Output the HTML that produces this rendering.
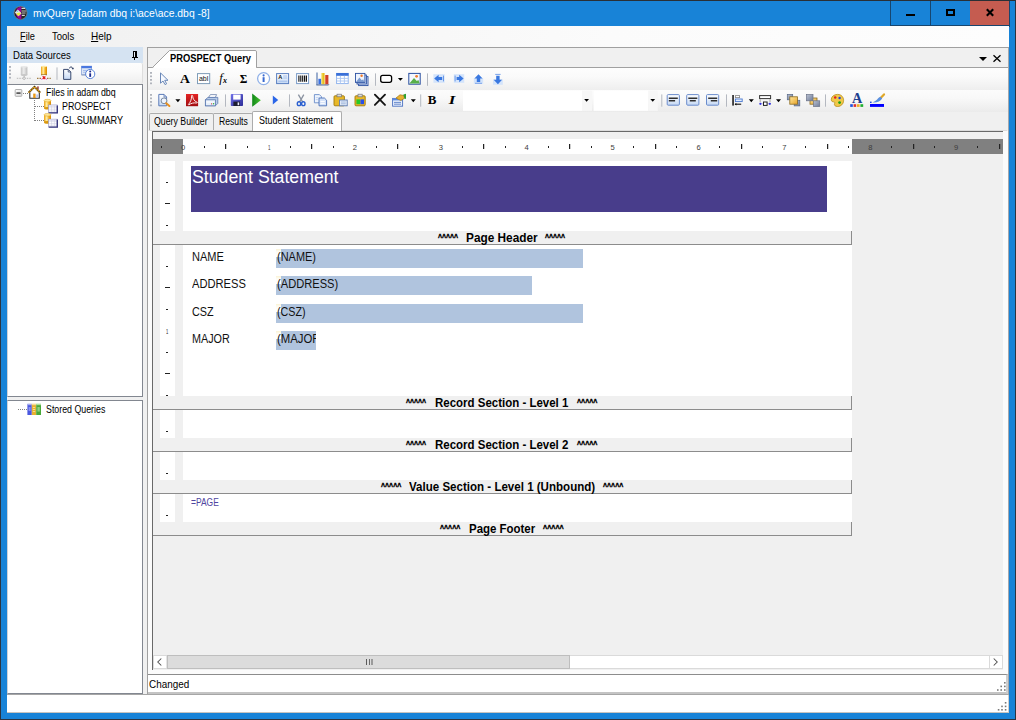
<!DOCTYPE html>
<html lang="en">
<head>
<meta charset="utf-8">
<title>mvQuery [adam dbq i:\ace\ace.dbq -8]</title>
<style>
*{box-sizing:border-box;margin:0;padding:0}
html,body{width:1016px;height:720px;overflow:hidden;background:#1883d7}
body{font-family:"Liberation Sans",sans-serif;font-size:12px;color:#000;position:relative}
.a{position:absolute}
.t{position:absolute;white-space:pre;line-height:1}
svg{position:absolute;overflow:visible}
#win{left:0;top:0;width:1016px;height:720px;background:#1883d7;border:1px solid #2c3440;border-top-color:#2a2f35}
#client{left:7px;top:26px;width:1002px;height:687px;background:#f0f0f0}
.sep{position:absolute;width:1px;height:16px;background:#b8bcc4}
.grip{position:absolute;width:2px;height:14px;background-image:linear-gradient(#b0b4bc 42%,transparent 42%);background-size:2px 4px}
.dd{position:absolute;width:0;height:0;border-left:3px solid transparent;border-right:3px solid transparent;border-top:3px solid #000}
.bar{position:absolute;left:153px;width:699px;height:14px;background:#f0f0f0;border-right:1px solid #8c8c8c;border-bottom:1px solid #8c8c8c}
.fld{position:absolute;left:276px;height:19px;background:#b0c4de}
.nt{position:absolute;left:276px;width:5px;height:8px;background:linear-gradient(#fbf3d4,#fdfcf6 35%,#fff)}
.vr{position:absolute;left:160px;width:15px;background:#fff}
.sec{position:absolute;left:183px;width:669px;background:#fff}
.vd{position:absolute;left:166px;width:2px;height:1px;background:#222}
.vl{position:absolute;left:165px;width:5px;height:1px;background:#222}
.hd{position:absolute;top:146px;width:1px;height:2px;background:#222}
.hl{position:absolute;top:144px;width:1px;height:5px;background:#222;box-shadow:0.5px 0 0 rgba(34,34,34,.45)}
</style>
</head>
<body>
<div id="win" class="a"></div>

<!-- title bar -->
<div class="t" id="t0" style="left:32.70px;top:9.00px;font-size:10.3px;color:#fff;font-weight:normal;transform:scaleX(1.0087);transform-origin:0 0;">mvQuery [adam dbq i:\ace\ace.dbq -8]</div>
<svg style="left:13px;top:5px" width="16" height="16" viewBox="13 5 16 16"><circle cx="20.5" cy="12.9" r="6.5" fill="#262626" stroke="#8a8078" stroke-width=".7"/><path d="M21.3 6.5A6.5 6.5 0 0 0 21.3 19.3Z" fill="#9a009a"/><path d="M21.5 8.3h3.6M21.8 15.4h3" stroke="#d8d8d8" stroke-width="1.3"/><path d="M21.5 10.9h4.6M22 13h3.6" stroke="#8c8c8c" stroke-width="1.5"/><path d="M14.8 12.4L17.8 9.6L21.6 13.2L18.4 16.2Z" fill="#e4e4dc"/><path d="M16 13.6L19.6 12.6L21 13.4L18.4 16.2Z" fill="#e8e840"/><circle cx="17.4" cy="11.2" r=".8" fill="#70d8d0"/></svg>
<div class="a" style="left:890px;top:1px;width:120px;height:26px;background:#17466f"></div>
<div class="a" style="left:891px;top:1px;width:39px;height:24px;background:#1883d7"></div>
<div class="a" style="left:931px;top:1px;width:39px;height:24px;background:#1883d7"></div>
<div class="a" style="left:970px;top:1px;width:39px;height:24px;background:#c55c50"></div>
<div class="a" style="left:906px;top:14px;width:9px;height:2.4px;background:#000"></div>
<div class="a" style="left:946px;top:9px;width:9px;height:7px;border:2px solid #000"></div>
<svg style="left:986px;top:9px" width="8" height="7" viewBox="0 0 8 7"><path d="M0.8 0.3L7.2 6.7M7.2 0.3L0.8 6.7" stroke="#000" stroke-width="2.1"/></svg>
<div id="client" class="a"></div>

<!-- menu bar -->
<div class="a" style="left:7px;top:26px;width:1002px;height:21px;background:linear-gradient(90deg,#f0f0f0,#fbfbfb 60%,#fdfdfd)"></div>
<div class="t" id="t1" style="left:20.00px;top:31.00px;font-size:10.5px;color:#000;font-weight:normal;transform:scaleX(0.8783);transform-origin:0 0;"><u>F</u>ile</div><div class="t" id="t2" style="left:52.00px;top:31.00px;font-size:10.5px;color:#000;font-weight:normal;transform:scaleX(0.9068);transform-origin:0 0;">Tools</div><div class="t" id="t3" style="left:91.30px;top:31.00px;font-size:10.5px;color:#000;font-weight:normal;transform:scaleX(0.9515);transform-origin:0 0;"><u>H</u>elp</div>
<!-- left panel -->
<div class="a" style="left:7px;top:47px;width:136px;height:16px;background:#d5e3f2"></div>
<div class="t" id="t4" style="left:12.50px;top:50.00px;font-size:10.5px;color:#000;font-weight:normal;transform:scaleX(0.9074);transform-origin:0 0;">Data Sources</div>
<svg style="left:131px;top:50px" width="7" height="10" viewBox="131 50 7 10" shape-rendering="crispEdges"><path d="M133 51h4v6h-4z" fill="#e8eef6"/><path d="M133 51h1v6h-1zM133 51h4v1h-4zM135 51h2v6h-2zM132 57h6v1h-6zM134 58h1v2h-1z" fill="#000"/></svg>
<div class="a" style="left:7px;top:63px;width:136px;height:21px;background:linear-gradient(#fdfdfd,#fafafa 40%,#eeeeee);border-right:1px solid #dedede;border-radius:0 2px 2px 0"></div>
<div class="grip" style="left:9px;top:66px;height:13px;background-size:2px 3.6px"></div>
<!-- tree 1 -->
<div class="a" style="left:7px;top:84px;width:136px;height:313px;background:#fff;border:1px solid #828790;border-left-color:#d0d2d8"></div>
<div class="t" id="t5" style="left:45.80px;top:88.00px;font-size:10px;color:#000;font-weight:normal;transform:scaleX(0.8830);transform-origin:0 0;">Files in adam dbq</div><div class="t" id="t6" style="left:62.20px;top:102.00px;font-size:10px;color:#000;font-weight:normal;transform:scaleX(0.8889);transform-origin:0 0;">PROSPECT</div><div class="t" id="t7" style="left:61.60px;top:116.00px;font-size:10px;color:#000;font-weight:normal;transform:scaleX(0.9098);transform-origin:0 0;">GL.SUMMARY</div>
<!-- tree 2 -->
<div class="a" style="left:7px;top:400px;width:136px;height:294px;background:#fff;border:1px solid #828790;border-left-color:#d0d2d8"></div>
<div class="t" id="t8" style="left:45.60px;top:405.00px;font-size:10px;color:#000;font-weight:normal;transform:scaleX(0.8817);transform-origin:0 0;">Stored Queries</div>
<!-- bottom status strip -->
<div class="a" style="left:7px;top:694px;width:1002px;height:19px;background:#fff;border-top:1px solid #a6a6a6;border-bottom:1px solid #c8c4be;border-right:1px solid #cfcfcf"></div>

<!-- right docking panel -->
<div class="a" style="left:147px;top:47px;width:862px;height:648px;background:#f0f0f0;border-left:1px solid #a0a0a0;border-top:1px solid #a0a0a0;border-right:1px solid #a4a8ae"></div>
<div class="a" style="left:148px;top:67px;width:860px;height:1px;background:#a0a0a0"></div>
<svg style="left:148px;top:48px" width="112" height="21" viewBox="148 48 112 21"><path d="M152.5 67.5L169.5 50.5H255Q256.5 50.5 256.5 52V67.5" fill="#fff" stroke="#a0a0a0" stroke-width="1"/><path d="M153 68L170 51.6H256V68Z" fill="#fff"/></svg>
<div class="t" id="t9" style="left:169.50px;top:53.00px;font-size:10.5px;color:#000;font-weight:bold;transform:scaleX(0.8894);transform-origin:0 0;">PROSPECT Query</div>
<svg style="left:979px;top:57px" width="8" height="4" viewBox="0 0 8 4"><path d="M0 0h8L4 4Z" fill="#000"/></svg>
<svg style="left:993px;top:55px" width="8" height="7" viewBox="0 0 8 7"><path d="M0.5 0.3L7.5 6.7M7.5 0.3L0.5 6.7" stroke="#000" stroke-width="1.3"/></svg>
<!-- toolbars bg -->
<div class="a" style="left:148px;top:68px;width:860px;height:22px;background:linear-gradient(#fdfdfd,#fafafa 40%,#eeeeee)"></div>
<div class="a" style="left:148px;top:90px;width:860px;height:22px;background:linear-gradient(#fcfcfc,#f8f8f8 40%,#ebebeb)"></div>
<div class="grip" style="left:150px;top:72px;height:13px;background-size:2px 3.5px"></div>
<div class="grip" style="left:150px;top:94px;height:13px;background-size:2px 3.5px"></div>
<!-- inner tabs -->
<div class="a" style="left:148px;top:130px;width:860px;height:545px;border:1px solid #fff;border-top-color:#dcdcdc"></div>
<div class="a" style="left:149px;top:113px;width:65px;height:17px;background:#f0f0f0;border:1px solid #acacac;border-bottom:none;border-radius:2px 2px 0 0"></div>
<div class="a" style="left:214px;top:113px;width:39px;height:17px;background:#f0f0f0;border:1px solid #acacac;border-bottom:none;border-left:none;border-radius:0 2px 0 0"></div>
<div class="a" style="left:252px;top:111px;width:90px;height:20px;background:#fff;border:1px solid #acacac;border-bottom:none;border-radius:2px 2px 0 0"></div>
<div class="t" id="t10" style="left:153.90px;top:117.00px;font-size:10px;color:#000;font-weight:normal;transform:scaleX(0.8769);transform-origin:0 0;">Query Builder</div><div class="t" id="t11" style="left:219.40px;top:117.00px;font-size:10px;color:#000;font-weight:normal;transform:scaleX(0.8637);transform-origin:0 0;">Results</div><div class="t" id="t12" style="left:259.40px;top:116.00px;font-size:10px;color:#000;font-weight:normal;transform:scaleX(0.8946);transform-origin:0 0;">Student Statement</div>
<!-- status -->
<div class="a" style="left:148px;top:674px;width:860px;height:21px;background:#fff;border-top:1px solid #8c8c8c;border-right:2px solid #cfcfcf;border-bottom:3px solid #c4c4c4"></div>
<div class="a" style="left:7px;top:694px;width:1002px;height:1px;background:#a6a6a6"></div>
<div class="t" id="t13" style="left:148.90px;top:679.00px;font-size:10.5px;color:#000;font-weight:normal;transform:scaleX(0.9420);transform-origin:0 0;">Changed</div>

<!-- design frame -->
<div class="a" style="left:148px;top:131px;width:860px;height:543px;background:#fbfbfb"></div>
<div class="a" style="left:152px;top:131px;width:851px;height:539px;background:#f0f0f0;border-left:1px solid #696969;border-top:1px solid #696969"></div>
<div class="a" style="left:153px;top:139px;width:850px;height:15px;background:#808080"></div>
<div class="a" style="left:183px;top:139px;width:669px;height:15px;background:#fff"></div>
<div class="hd" style="left:161px"></div>
<div class="t" id="t14" style="left:181.00px;top:144.00px;font-size:7.6px;color:#3c3c3c;font-weight:normal;">0</div>
<div class="hd" style="left:204px"></div>
<div class="hl" style="left:225px"></div>
<div class="hd" style="left:247px"></div>
<div class="t" id="t15" style="left:267.70px;top:144.00px;font-size:7.6px;color:#3c3c3c;font-weight:normal;transform:scaleX(0.6000);transform-origin:0 0;">1</div>
<div class="hd" style="left:290px"></div>
<div class="hl" style="left:311px"></div>
<div class="hd" style="left:333px"></div>
<div class="t" id="t16" style="left:352.80px;top:144.00px;font-size:7.6px;color:#3c3c3c;font-weight:normal;">2</div>
<div class="hd" style="left:376px"></div>
<div class="hl" style="left:397px"></div>
<div class="hd" style="left:419px"></div>
<div class="t" id="t17" style="left:438.70px;top:144.00px;font-size:7.6px;color:#3c3c3c;font-weight:normal;">3</div>
<div class="hd" style="left:462px"></div>
<div class="hl" style="left:483px"></div>
<div class="hd" style="left:505px"></div>
<div class="t" id="t18" style="left:524.60px;top:144.00px;font-size:7.6px;color:#3c3c3c;font-weight:normal;">4</div>
<div class="hd" style="left:548px"></div>
<div class="hl" style="left:569px"></div>
<div class="hd" style="left:591px"></div>
<div class="t" id="t19" style="left:610.50px;top:144.00px;font-size:7.6px;color:#3c3c3c;font-weight:normal;">5</div>
<div class="hd" style="left:633px"></div>
<div class="hl" style="left:655px"></div>
<div class="hd" style="left:676px"></div>
<div class="t" id="t20" style="left:696.40px;top:144.00px;font-size:7.6px;color:#3c3c3c;font-weight:normal;">6</div>
<div class="hd" style="left:719px"></div>
<div class="hl" style="left:741px"></div>
<div class="hd" style="left:762px"></div>
<div class="t" id="t21" style="left:782.30px;top:144.00px;font-size:7.6px;color:#3c3c3c;font-weight:normal;">7</div>
<div class="hd" style="left:805px"></div>
<div class="hl" style="left:827px"></div>
<div class="hd" style="left:848px"></div>
<div class="t" id="t22" style="left:868.20px;top:144.00px;font-size:7.6px;color:#3c3c3c;font-weight:normal;">8</div>
<div class="hd" style="left:891px"></div>
<div class="hl" style="left:913px"></div>
<div class="hd" style="left:934px"></div>
<div class="t" id="t23" style="left:954.10px;top:144.00px;font-size:7.6px;color:#3c3c3c;font-weight:normal;">9</div>
<div class="hd" style="left:977px"></div>
<div class="hl" style="left:999px"></div>
<div class="sec" style="top:161px;height:70px"></div>
<div class="sec" style="top:245px;height:151px"></div>
<div class="sec" style="top:410px;height:28px"></div>
<div class="sec" style="top:452px;height:28px"></div>
<div class="sec" style="top:494px;height:28px"></div>
<div class="vr" style="top:161px;height:70px"></div>
<div class="vd" style="top:182px"></div>
<div class="vl" style="top:203px"></div>
<div class="vd" style="top:225px"></div>
<div class="vr" style="top:245px;height:151px"></div>
<div class="vd" style="top:266px"></div>
<div class="vl" style="top:287px"></div>
<div class="vd" style="top:309px"></div>
<div class="t" id="t24" style="left:166.30px;top:328.00px;font-size:7.4px;color:#222;font-weight:normal;transform:scaleX(0.5500);transform-origin:0 0;">1</div>
<div class="vd" style="top:352px"></div>
<div class="vl" style="top:373px"></div>
<div class="vd" style="top:395px"></div>
<div class="vr" style="top:410px;height:28px"></div>
<div class="vd" style="top:431px"></div>
<div class="vr" style="top:452px;height:28px"></div>
<div class="vd" style="top:473px"></div>
<div class="vr" style="top:494px;height:28px"></div>
<div class="vd" style="top:515px"></div>
<div class="a" style="left:191px;top:166px;width:636px;height:46px;background:#483d8b"></div>
<div class="t" id="t25" style="left:191.90px;top:168.00px;font-size:18px;color:#fff;font-weight:normal;transform:scaleX(0.9826);transform-origin:0 0;">Student Statement</div>
<div class="bar" style="top:231px"></div>
<div class="t" id="t26" style="left:437.80px;top:233.00px;font-size:9px;color:#000;font-weight:bold;-webkit-text-stroke:0.45px #000;transform:scaleX(0.7660);transform-origin:0 0;">^^^^^</div>
<div class="t" id="t27" style="left:466.20px;top:232.00px;font-size:12.5px;color:#000;font-weight:bold;transform:scaleX(0.9464);transform-origin:0 0;">Page Header</div>
<div class="t" id="t28" style="left:545.40px;top:233.00px;font-size:9px;color:#000;font-weight:bold;-webkit-text-stroke:0.45px #000;transform:scaleX(0.7623);transform-origin:0 0;">^^^^^</div>
<div class="bar" style="top:396px"></div>
<div class="t" id="t29" style="left:405.90px;top:398.00px;font-size:9px;color:#000;font-weight:bold;-webkit-text-stroke:0.45px #000;transform:scaleX(0.7660);transform-origin:0 0;">^^^^^</div>
<div class="t" id="t30" style="left:434.60px;top:397.00px;font-size:12.5px;color:#000;font-weight:bold;transform:scaleX(0.9185);transform-origin:0 0;">Record Section - Level 1</div>
<div class="t" id="t31" style="left:576.70px;top:398.00px;font-size:9px;color:#000;font-weight:bold;-webkit-text-stroke:0.45px #000;transform:scaleX(0.7771);transform-origin:0 0;">^^^^^</div>
<div class="bar" style="top:438px"></div>
<div class="t" id="t32" style="left:405.90px;top:440.00px;font-size:9px;color:#000;font-weight:bold;-webkit-text-stroke:0.45px #000;transform:scaleX(0.7660);transform-origin:0 0;">^^^^^</div>
<div class="t" id="t33" style="left:434.60px;top:439.00px;font-size:12.5px;color:#000;font-weight:bold;transform:scaleX(0.9185);transform-origin:0 0;">Record Section - Level 2</div>
<div class="t" id="t34" style="left:576.70px;top:440.00px;font-size:9px;color:#000;font-weight:bold;-webkit-text-stroke:0.45px #000;transform:scaleX(0.7771);transform-origin:0 0;">^^^^^</div>
<div class="bar" style="top:480px"></div>
<div class="t" id="t35" style="left:380.60px;top:482.00px;font-size:9px;color:#000;font-weight:bold;-webkit-text-stroke:0.45px #000;transform:scaleX(0.7697);transform-origin:0 0;">^^^^^</div>
<div class="t" id="t36" style="left:409.00px;top:481.00px;font-size:12.5px;color:#000;font-weight:bold;transform:scaleX(0.9242);transform-origin:0 0;">Value Section - Level 1 (Unbound)</div>
<div class="t" id="t37" style="left:603.00px;top:482.00px;font-size:9px;color:#000;font-weight:bold;-webkit-text-stroke:0.45px #000;transform:scaleX(0.7697);transform-origin:0 0;">^^^^^</div>
<div class="bar" style="top:522px"></div>
<div class="t" id="t38" style="left:440.40px;top:524.00px;font-size:9px;color:#000;font-weight:bold;-webkit-text-stroke:0.45px #000;transform:scaleX(0.7697);transform-origin:0 0;">^^^^^</div>
<div class="t" id="t39" style="left:469.00px;top:523.00px;font-size:12.5px;color:#000;font-weight:bold;transform:scaleX(0.9161);transform-origin:0 0;">Page Footer</div>
<div class="t" id="t40" style="left:542.70px;top:524.00px;font-size:9px;color:#000;font-weight:bold;-webkit-text-stroke:0.45px #000;transform:scaleX(0.7882);transform-origin:0 0;">^^^^^</div>
<div class="fld" style="top:249px;width:307px"></div>
<div class="fld" style="top:276px;width:256px"></div>
<div class="fld" style="top:304px;width:307px"></div>
<div class="fld" style="top:331px;width:40px"></div>
<div class="nt" style="top:249px"></div><div class="nt" style="top:276px"></div><div class="nt" style="top:304px"></div><div class="nt" style="top:331px"></div>
<div class="t" id="t41" style="left:191.70px;top:251.00px;font-size:12px;color:#111;font-weight:normal;transform:scaleX(0.9202);transform-origin:0 0;">NAME</div><div class="t" id="t42" style="left:191.70px;top:278.00px;font-size:12px;color:#111;font-weight:normal;transform:scaleX(0.9292);transform-origin:0 0;">ADDRESS</div><div class="t" id="t43" style="left:191.70px;top:306.00px;font-size:12px;color:#111;font-weight:normal;transform:scaleX(0.8999);transform-origin:0 0;">CSZ</div><div class="t" id="t44" style="left:191.70px;top:333.00px;font-size:12px;color:#111;font-weight:normal;transform:scaleX(0.9000);transform-origin:0 0;">MAJOR</div>
<div class="t" id="t45" style="left:277.40px;top:251.00px;font-size:12px;color:#111;font-weight:normal;transform:scaleX(0.9141);transform-origin:0 0;">(NAME)</div><div class="t" id="t46" style="left:277.40px;top:278.00px;font-size:12px;color:#111;font-weight:normal;transform:scaleX(0.9271);transform-origin:0 0;">(ADDRESS)</div><div class="t" id="t47" style="left:277.40px;top:306.00px;font-size:12px;color:#111;font-weight:normal;transform:scaleX(0.8939);transform-origin:0 0;">(CSZ)</div>
<div class="a" style="left:276px;top:331px;width:40px;height:19px;overflow:hidden"><div class="t" id="t48" style="left:1.40px;top:2.00px;font-size:12px;color:#111;font-weight:normal;transform:scaleX(0.9454);transform-origin:0 0;">(MAJOR</div></div>
<div class="t" id="t49" style="left:191.40px;top:498.00px;font-size:10px;color:#5046a0;font-weight:normal;transform:scaleX(0.8460);transform-origin:0 0;">=PAGE</div>
<!-- h scrollbar -->
<div class="a" style="left:153px;top:655px;width:850px;height:14px;background:#fff;border:1px solid #dadada"></div>
<div class="a" style="left:167px;top:655px;width:403px;height:14px;background:#dcdcdc;border:1px solid #bebebe"></div>
<div class="a" style="left:166px;top:656px;width:1px;height:12px;background:#e4e4e4"></div>
<div class="a" style="left:989px;top:656px;width:1px;height:12px;background:#dadada"></div>
<svg style="left:157px;top:658px" width="5" height="8" viewBox="0 0 5 8"><path d="M4.3 0.5L0.8 4L4.3 7.5" stroke="#505050" stroke-width="1.05" fill="none"/></svg>
<svg style="left:993px;top:658px" width="5" height="8" viewBox="0 0 5 8"><path d="M0.7 0.5L4.2 4L0.7 7.5" stroke="#505050" stroke-width="1.05" fill="none"/></svg>
<div class="a" style="left:366px;top:659px;width:1px;height:6px;background:#5a5a5a;box-shadow:3px 0 0 #6a6a6a,5.5px 0 0 #5a5a5a"></div>

<svg style="left:0;top:0" width="1016" height="720" viewBox="0 0 1016 720">
<defs>
<linearGradient id="gold" x1="0" x2="1" y1="0" y2="0"><stop offset="0" stop-color="#eca010"/><stop offset=".38" stop-color="#fff0a8"/><stop offset=".7" stop-color="#f4b020"/><stop offset="1" stop-color="#d88800"/></linearGradient>
<linearGradient id="grey" x1="0" x2="1" y1="0" y2="0"><stop offset="0" stop-color="#c4c4c4"/><stop offset=".45" stop-color="#ececec"/><stop offset="1" stop-color="#bcbcbc"/></linearGradient>
<linearGradient id="lb" x1="0" x2="0" y1="0" y2="1"><stop offset="0" stop-color="#ffffff"/><stop offset="1" stop-color="#c4d8f4"/></linearGradient>
<linearGradient id="red" x1="0" x2="0" y1="0" y2="1"><stop offset="0" stop-color="#e42424"/><stop offset="1" stop-color="#a00c10"/></linearGradient>
<linearGradient id="sv" x1="0" x2="1" y1="0" y2="1"><stop offset="0" stop-color="#7070e8"/><stop offset="1" stop-color="#2c2c98"/></linearGradient>
<linearGradient id="grn" x1="0" x2="1" y1="0" y2="0"><stop offset="0" stop-color="#108818"/><stop offset="1" stop-color="#48c030"/></linearGradient>
<linearGradient id="yl" x1="0" x2="1" y1="0" y2="1"><stop offset="0" stop-color="#ffe8a0"/><stop offset="1" stop-color="#e8a428"/></linearGradient>
<linearGradient id="gb" x1="0" x2="1" y1="0" y2="1"><stop offset="0" stop-color="#b8c0d0"/><stop offset="1" stop-color="#707c98"/></linearGradient>
<linearGradient id="bx" x1="0" x2="1" y1="0" y2="1"><stop offset="0" stop-color="#ffffff"/><stop offset="1" stop-color="#dcdcdc"/></linearGradient>
</defs>
<!-- ===== left toolbar ===== -->
<g>
<rect x="20.8" y="66.8" width="6.6" height="8.2" fill="url(#grey)"/><ellipse cx="24.1" cy="66.8" rx="3.3" ry=".9" fill="#e8e8e8"/><ellipse cx="24.1" cy="75" rx="3.3" ry="1" fill="#c8c8c8"/>
<path d="M16.8 78.3H31" stroke="#b8b8b8" stroke-width="1" stroke-dasharray="1.5 1"/><path d="M24.1 76v1.2" stroke="#b0b0b0"/><circle cx="24.1" cy="78.3" r="1.2" fill="#f0f0f0" stroke="#a8a8a8" stroke-width=".7"/>
<rect x="41" y="66.4" width="6" height="8.4" fill="url(#gold)"/><ellipse cx="44" cy="66.5" rx="3" ry=".8" fill="#ffe8a0"/><path d="M41 74.8h6" stroke="#8a6010" stroke-width=".8"/>
<path d="M37 78.3H50.8" stroke="#8a5a10" stroke-width="1" stroke-dasharray="1.5 1"/><circle cx="44" cy="77.7" r="2.6" fill="#fff"/><path d="M42.7 76.3l2.6 2.8M45.4 76.5l-2.8 2.5" stroke="#e01818" stroke-width="1.3"/><path d="M41.3 79.2h1M45.8 79.2h1" stroke="#d020d0" stroke-width=".8"/>
<rect x="56.5" y="67.4" width="1" height="12.4" fill="#b4b8c0"/>
<path d="M63.6 69.4H68.2L70.8 72V79.4H63.6Z" fill="url(#lb)" stroke="#3a4a70" stroke-width="1"/><path d="M68.2 69.4V72H70.8" fill="none" stroke="#3a4a70" stroke-width=".8"/><path d="M69.2 68.2C70.4 66.4 72.2 66.6 72.8 68.6" fill="none" stroke="#2a3a60" stroke-width="1"/><path d="M71.6 68.2l1.4 1.6 1-2z" fill="#2a3a60"/>
<rect x="81.6" y="66.2" width="10" height="8.6" fill="#dce6f6" stroke="#8aa4d8" stroke-width=".8"/><rect x="81.4" y="66" width="10.4" height="2.2" fill="#4a78e0"/><path d="M81.6 75h8" stroke="#8090b0" stroke-width=".8"/><path d="M83 70.5h4M83 72.3h3" stroke="#9ab4e8" stroke-width=".8"/>
<circle cx="90.2" cy="74" r="4.6" fill="#fff" stroke="#5a84d8" stroke-width="1"/><circle cx="90.2" cy="71.6" r="1" fill="#1a2a90"/><rect x="89.3" y="73.3" width="1.8" height="3.6" fill="#1a2a90"/>
</g>
<!-- ===== tree icons ===== -->
<g>
<rect x="15.2" y="89.5" width="6.6" height="6.8" rx=".6" fill="url(#bx)" stroke="#b0b0b0" stroke-width="1"/><path d="M16.4 93.1h4.2" stroke="#404040" stroke-width="1.5"/>
<path d="M23 93.5H28M34.5 100V121M35 106.5H44M35 120.5H44" stroke="#808080" stroke-width="1" stroke-dasharray="1 1" fill="none" shape-rendering="crispEdges"/>
<rect x="37.3" y="86.4" width="1.3" height="3" fill="#8a1818"/><rect x="29.8" y="92" width="9.4" height="6.2" fill="#fff"/><path d="M29.8 92.4V98.2H39.3V92.4" fill="none" stroke="#303030" stroke-width="1.1"/>
<path d="M28.6 92.6L34.5 86.8L40.2 92.6" fill="none" stroke="#4a3a18" stroke-width="2"/><path d="M28.6 92.6L34.5 86.8L40.2 92.6" fill="none" stroke="#f0a818" stroke-width="1.3" stroke-dasharray="1.4 .8"/>
<rect x="33.2" y="93.6" width="2.4" height="4.4" fill="#e89818"/><rect x="36.2" y="94.4" width="1.9" height="3.2" fill="#b8c8f4"/>
<g transform="translate(0,0.0)"><rect x="44" y="100.6" width="7" height="7.6" fill="url(#gold)"/><ellipse cx="47.5" cy="108.2" rx="3.5" ry="1.3" fill="#d89810"/><ellipse cx="47.5" cy="100.6" rx="3.5" ry="1.3" fill="#ffe898" stroke="#d8a020" stroke-width=".5"/>
<rect x="48.6" y="105" width="8.6" height="7.8" fill="#ffffff" stroke="#9a9ac4" stroke-width=".7"/><rect x="49" y="105.4" width="7.8" height="1.4" fill="#e4e4f4"/><path d="M51.6 105.4v7.2M54.4 105.4v7.2M49 107.2h8M49 109.2h8M49 111h8" stroke="#c8c8de" stroke-width=".5"/><path d="M57.3 105.4V112.9H48.8" fill="none" stroke="#3a3a80" stroke-width="1.4"/></g><g transform="translate(0,14.2)"><rect x="44" y="100.6" width="7" height="7.6" fill="url(#gold)"/><ellipse cx="47.5" cy="108.2" rx="3.5" ry="1.3" fill="#d89810"/><ellipse cx="47.5" cy="100.6" rx="3.5" ry="1.3" fill="#ffe898" stroke="#d8a020" stroke-width=".5"/>
<rect x="48.6" y="105" width="8.6" height="7.8" fill="#ffffff" stroke="#9a9ac4" stroke-width=".7"/><rect x="49" y="105.4" width="7.8" height="1.4" fill="#e4e4f4"/><path d="M51.6 105.4v7.2M54.4 105.4v7.2M49 107.2h8M49 109.2h8M49 111h8" stroke="#c8c8de" stroke-width=".5"/><path d="M57.3 105.4V112.9H48.8" fill="none" stroke="#3a3a80" stroke-width="1.4"/></g>
<path d="M18 409.5H27" stroke="#808080" stroke-width="1" stroke-dasharray="1 1" shape-rendering="crispEdges"/>
<rect x="27.4" y="404.2" width="4.4" height="10.8" fill="#4a58e0"/><rect x="27.4" y="403.6" width="4.4" height="1.6" fill="#a8b0f0"/><rect x="28.6" y="407" width="2" height="4" fill="#8890f0"/>
<rect x="31.8" y="404.2" width="4.4" height="10.8" fill="#e8b030"/><rect x="31.8" y="403.6" width="4.4" height="1.6" fill="#f4dc98"/><path d="M32.8 407.5h2.4M32.8 409.5h2.4M32.8 411.5h2.4" stroke="#f8e8a0" stroke-width=".8"/>
<rect x="36.2" y="404.2" width="4.8" height="10.8" fill="#48a838"/><rect x="36.2" y="403.6" width="4.8" height="1.6" fill="#b0e0a0"/><rect x="37.4" y="407" width="2.4" height="4.6" fill="#90d080"/>
</g>
<!-- ===== toolbar row 1 ===== -->
<g>
<path d="M160.5 72.9V83.2L163 81L165 84.6L166.6 83.8L164.7 80.3H168Z" fill="#f6f9ff" stroke="#6a88b8" stroke-width="1" stroke-linejoin="round"/>
<text x="0" y="0" transform="translate(185,83.1) scale(1.12,1)" font-family="Liberation Serif,serif" font-weight="bold" font-size="12.2" text-anchor="middle" fill="#000">A</text>
<rect x="197.5" y="73.6" width="12.2" height="10" fill="#fff" stroke="#7f9db9" stroke-width="1"/><text x="203.6" y="81.2" font-family="Liberation Sans,sans-serif" font-size="7" text-anchor="middle" fill="#111">abl</text>
<text x="219.3" y="81.6" font-family="Liberation Serif,serif" font-style="italic" font-size="12.6" fill="#000">f</text><text x="223" y="82.7" font-family="Liberation Serif,serif" font-weight="bold" font-style="italic" font-size="8" fill="#000">x</text>
<text x="243.5" y="83.4" font-family="Liberation Serif,serif" font-weight="bold" font-size="11.6" text-anchor="middle" fill="#000">Σ</text>
<circle cx="263.6" cy="78.6" r="6" fill="#fff" stroke="#8fb0e8" stroke-width="1.3"/><circle cx="263.6" cy="75.4" r="1.05" fill="#3a6ad0"/><rect x="262.6" y="77.2" width="2" height="4.8" fill="#3a6ad0"/>
<rect x="276.6" y="73.6" width="12" height="10" fill="url(#lb)" stroke="#5a7fc0" stroke-width="1"/><text x="278.2" y="79.4" font-family="Liberation Sans,sans-serif" font-weight="bold" font-size="5.6" fill="#111">A</text><path d="M283.2 76h4M283.2 78h4M278.4 81.2h8.8" stroke="#9ab8e8" stroke-width=".9"/>
<rect x="296.6" y="73.6" width="12" height="10" fill="#fff" stroke="#7a9cc8" stroke-width="1"/><path d="M298.9 75.6v6.2M300.8 75.6v6.2M302.7 75.6v6.2M304.6 75.6v6.2M306.4 75.6v6.2" stroke="#111" stroke-width="1.15"/>
<path d="M316.4 84H329.6L328.2 85.8H316.4Z" fill="#8a9ab8"/><path d="M317 72.4V85" stroke="#5a7ab0" stroke-width="1.2"/><rect x="318.4" y="78.8" width="2.8" height="5.4" fill="#3a70e0"/><rect x="321.6" y="73" width="3" height="11.2" fill="#e8c020"/><rect x="325" y="75" width="3.4" height="9.2" fill="#d04028"/><path d="M322 73v11" stroke="#f8e880" stroke-width=".7"/><path d="M325.5 75v9" stroke="#f08060" stroke-width=".7"/>
<rect x="336.6" y="73.4" width="11.6" height="10.2" fill="#fff" stroke="#8ab0ec" stroke-width=".9"/><rect x="336.2" y="73" width="12.4" height="2.8" fill="#3a70d8"/><path d="M340.4 75.8v7.8M344.4 75.8v7.8M336.6 78.4h11.6M336.6 81h11.6" stroke="#a8c4f0" stroke-width=".9"/>
<rect x="358.6" y="76.6" width="9.4" height="9" fill="#dce8fa" stroke="#2a4fa0" stroke-width=".9"/><rect x="357" y="75" width="9.4" height="9" fill="#dce8fa" stroke="#2a4fa0" stroke-width=".9"/><rect x="355.5" y="73.4" width="9.4" height="9" fill="#eef4fe" stroke="#2a4fa0" stroke-width=".9"/><circle cx="361.6" cy="75.8" r="1.2" fill="#f07828"/><path d="M356 82L359.4 77.6L361.8 80.2L363.2 79.2L364.4 82Z" fill="#7a9ad0"/>
<rect x="375.0" y="73.4" width="1" height="12.4" fill="#b4b8c0"/>
<rect x="380.7" y="75.4" width="10.9" height="6.9" rx="2" fill="#fff" stroke="#000" stroke-width="1.3"/>
<path d="M397.9 77.9h5l-2.5 2.9z" fill="#000"/>
<rect x="408.8" y="73.4" width="11.4" height="10.8" fill="#f4f8ff" stroke="#2a4fa0" stroke-width="1"/><circle cx="416.6" cy="76.3" r="1.4" fill="#f08030"/><path d="M409.4 83.6L414 78L416.8 81L418.4 80L419.7 83.6Z" fill="#58b048"/>
<rect x="427.0" y="73.4" width="1" height="12.4" fill="#b4b8c0"/>
<rect x="433.4" y="74.2" width="11.2" height="8.6" fill="#d4e4fb"/><path d="M434.2 78.5L438.6 74.8V77H442.2V80H438.6V82.2Z" fill="#3a78e0"/><rect x="443" y="75.6" width="1" height="5.8" fill="#6a98e8"/>
<rect x="453.8" y="74.2" width="10.4" height="8.6" fill="#d4e4fb"/><path d="M463.6 78.5L459.2 74.8V77H456.6V80H459.2V82.2Z" fill="#3a78e0"/><rect x="454.6" y="75.6" width="1" height="5.8" fill="#6a98e8"/>
<rect x="473.8" y="78.2" width="9.4" height="5.6" fill="#d4e4fb"/><path d="M478.5 74.2L482.6 78.6H480.2V82H476.8V78.6H474.4Z" fill="#3a78e0"/><rect x="475" y="82.8" width="7" height=".9" fill="#6a98e8"/>
<rect x="493" y="79.4" width="9.8" height="5.4" fill="#d4e4fb"/><path d="M497.9 84.3L493.7 79.8H496.2V75.8H499.6V79.8H502.1Z" fill="#3a78e0"/><rect x="495.2" y="73.9" width="5.4" height=".9" fill="#6a98e8"/>
</g>
<!-- ===== toolbar row 2 ===== -->
<g>
<path d="M158.8 94.4H164L166.6 97V105.8H158.8Z" fill="url(#lb)" stroke="#5a7ab8" stroke-width="1"/><path d="M164 94.4V97H166.6" fill="none" stroke="#5a7ab8" stroke-width=".8"/><circle cx="164" cy="100.8" r="2.9" fill="#eef4ff" fill-opacity=".85" stroke="#7a8aa0" stroke-width="1"/><path d="M166.2 103.2L169.4 106" stroke="#e89020" stroke-width="2" stroke-linecap="round"/>
<path d="M175.4 99.3h5l-2.5 2.9z" fill="#000"/>
<rect x="186" y="94" width="12.1" height="12.2" fill="url(#red)"/><path d="M188.4 104.6C190.4 102.2 191.9 98.6 191.5 96.2C191.3 95 192.7 95 192.7 96.3C192.7 98.6 194.6 101.5 196.8 102C197.7 102.2 197.4 103.2 196.3 103C193.8 102.5 190.8 103.3 188.8 105Z" fill="none" stroke="#fff" stroke-width=".9"/>
<path d="M208.4 97.6L210.4 94.6H216.6L215.2 97.6Z" fill="#fff" stroke="#6a80a8" stroke-width=".8"/><path d="M205.4 99.6L208 97.4H217.8V103.4L215.4 105.8H205.4Z" fill="#b8cce8" stroke="#5a78b0" stroke-width=".8"/><rect x="205.4" y="99.8" width="10" height="6" fill="#e6eef9" stroke="#5a78b0" stroke-width=".8"/><path d="M206.5 102h7.8" stroke="#fff" stroke-width="1"/><circle cx="213.6" cy="103.8" r=".7" fill="#30b030"/><circle cx="211.6" cy="103.8" r=".6" fill="#d03030"/>
<rect x="225.0" y="94.4" width="1" height="12.3" fill="#b4b8c0"/>
<rect x="230.8" y="94" width="12.2" height="12" rx=".8" fill="url(#sv)"/><rect x="233.2" y="94.6" width="7.4" height="5" fill="#fff"/><rect x="233.4" y="101.6" width="6.6" height="4.4" fill="#1c1c30"/><rect x="237.6" y="102.4" width="1.6" height="2.8" fill="#e8e8ff"/>
<path d="M252.2 93.6L260.8 100.2L252.2 106.8Z" fill="url(#grn)"/>
<path d="M272.8 95.6L278.2 100.1L272.8 104.6Z" fill="#2a66e8"/>
<rect x="289.0" y="94.4" width="1" height="12.3" fill="#b4b8c0"/>
<path d="M298.4 94.6L302.6 101.8M303.8 94.6L299.6 101.8" stroke="#8a92a0" stroke-width="1.3"/><ellipse cx="299" cy="103.7" rx="1.7" ry="1.9" fill="none" stroke="#2a5fd0" stroke-width="1.4"/><ellipse cx="303.3" cy="103.7" rx="1.7" ry="1.9" fill="none" stroke="#2a5fd0" stroke-width="1.4"/>
<path d="M314.4 94.6H319.4L321.4 96.6V102.8H314.4Z" fill="#eef4fd" stroke="#6a8cc8" stroke-width=".9"/><path d="M319 98H324.4L326.6 100.2V105.8H319Z" fill="#d4e2f8" stroke="#4a6fb8" stroke-width=".9"/><path d="M320.4 101.5h4.4M320.4 103.4h4.4" stroke="#fff" stroke-width=".9"/><path d="M315.8 97.6h3M315.8 99.6h2" stroke="#b8ccec" stroke-width=".8"/>
<rect x="334" y="95.8" width="10.4" height="10" rx="1" fill="#e8b828" stroke="#a07808" stroke-width=".9"/><rect x="337" y="94.2" width="4.4" height="2.6" fill="#dcdcdc" stroke="#777" stroke-width=".7"/><rect x="339.6" y="100" width="7.6" height="5.8" fill="#e8f0fc" stroke="#5a78b0" stroke-width=".9"/><path d="M341 102h4.8M341 103.8h4.8" stroke="#8aa4d0" stroke-width=".8"/>
<rect x="355" y="95.8" width="10.2" height="10" rx="1" fill="#e8b828" stroke="#a07808" stroke-width=".9"/><rect x="358" y="94.2" width="4.2" height="2.6" fill="#dcdcdc" stroke="#777" stroke-width=".7"/><rect x="356.4" y="99.4" width="3.6" height="4.8" fill="#28c828"/><rect x="360.4" y="99.4" width="3.6" height="4.8" fill="#2850e8"/>
<path d="M374.9 94.7L385 104.9M385 94.7L374.9 104.9" stroke="#151515" stroke-width="1.9" stroke-linecap="round"/>
<rect x="392.6" y="98.4" width="10" height="7.8" fill="#e8f0fc" stroke="#4a70c0" stroke-width=".9"/><rect x="392.6" y="98.4" width="10" height="2" fill="#5a88e0"/><path d="M394 102.4h7M394 104.2h7" stroke="#4a70c0" stroke-width=".8"/><path d="M396 98L400 94.8L404 95.5L404.4 98.4L401 100.4L398.4 99.4Z" fill="#e8b030" stroke="#a07818" stroke-width=".7"/><path d="M403.4 94.6L406 93.8V99L404.4 98.4Z" fill="#30a030"/>
<path d="M410.8 99.3h5l-2.5 2.9z" fill="#000"/><rect x="420.2" y="94.4" width="1" height="12.3" fill="#b4b8c0"/>
<text transform="translate(432,103.7) scale(1.12,1)" font-family="Liberation Serif,serif" font-weight="bold" font-size="11.6" text-anchor="middle" fill="#000">B</text>
<text transform="translate(452,103.7) scale(1.45,1)" font-family="Liberation Serif,serif" font-weight="bold" font-style="italic" font-size="11.6" text-anchor="middle" fill="#000">I</text>
<rect x="463" y="90.6" width="119" height="20.2" fill="#fff"/><rect x="582" y="90.6" width="10" height="20.2" fill="#f7f7f7"/><path d="M584.2 99.1h4.8l-2.4 2.6z" fill="#000"/>
<rect x="593.6" y="90.6" width="54.6" height="20.2" fill="#fff"/><rect x="648.2" y="90.6" width="9.6" height="20.2" fill="#f7f7f7"/><path d="M650.3 99.1h4.8l-2.4 2.6z" fill="#000"/>
<rect x="661.3" y="94.4" width="1" height="12.3" fill="#b4b8c0"/>
<rect x="667.2" y="94.6" width="12.2" height="10.6" rx="1" fill="url(#lb)" stroke="#6a8ccc" stroke-width="1"/><path d="M668.8 98.2h9M668.8 100.7h6.3" stroke="#303030" stroke-width="1.5"/>
<rect x="686.7" y="94.6" width="12.2" height="10.6" rx="1" fill="url(#lb)" stroke="#6a8ccc" stroke-width="1"/><path d="M688.3 98.2h9M689.8 100.7h6" stroke="#303030" stroke-width="1.5"/>
<rect x="706.5" y="94.6" width="12.2" height="10.6" rx="1" fill="url(#lb)" stroke="#6a8ccc" stroke-width="1"/><path d="M708.2 98.2h9M710.8 100.7h6.4" stroke="#303030" stroke-width="1.5"/>
<rect x="726.0" y="94.4" width="1" height="12.3" fill="#b4b8c0"/>
<rect x="732.3" y="95" width="1.5" height="10.6" fill="#111"/><rect x="735.4" y="95.6" width="4.2" height="2" fill="#fff" stroke="#888" stroke-width=".8"/><rect x="735.4" y="99" width="6.8" height="2.6" fill="#e4eefc" stroke="#4a78d0" stroke-width=".9"/><path d="M735 104.2h6.2" stroke="#111" stroke-width="1.1"/><path d="M734.6 104.2l1.8-1.3v2.6z" fill="#111"/>
<path d="M748.8 99.3h5l-2.5 2.9z" fill="#000"/>
<rect x="759.6" y="95.6" width="11" height="3" fill="#fff" stroke="#333" stroke-width="1"/><path d="M760.2 99.2v3M770 99.2v3" stroke="#a0a0a0" stroke-width=".9"/><path d="M761.5 103.8h7" stroke="#8080d0" stroke-width=".8" stroke-dasharray="1 1"/><circle cx="760.4" cy="103.8" r="1.15" fill="#3030e0"/><circle cx="769.8" cy="103.8" r="1.15" fill="#3030e0"/><rect x="763.5" y="102" width="3.6" height="3.4" fill="#fff" stroke="#222" stroke-width="1"/>
<path d="M776.0 99.3h5l-2.5 2.9z" fill="#000"/>
<rect x="787.3" y="94.4" width="5.4" height="5.4" fill="url(#gb)" stroke="#5a6a88" stroke-width=".7"/><rect x="794.2" y="100.3" width="5.6" height="5.6" fill="url(#gb)" stroke="#5a6a88" stroke-width=".7"/><rect x="789.8" y="96.8" width="7.6" height="7.4" fill="url(#yl)" stroke="#8a6a20" stroke-width=".8"/>
<rect x="810" y="98" width="7" height="6.2" fill="url(#yl)" stroke="#8a6a20" stroke-width=".8"/><rect x="806.6" y="94.6" width="6.4" height="6.2" fill="url(#gb)" stroke="#6a7288" stroke-width=".7"/><rect x="813.5" y="100.8" width="6.2" height="5.7" fill="url(#gb)" stroke="#6a7288" stroke-width=".7"/>
<rect x="825.0" y="94.4" width="1" height="12.3" fill="#b4b8c0"/>
<path d="M837.6 94.4C841.6 94.4 843.6 97.4 843.6 100.4C843.6 104 840.8 106.5 837.6 106.5C835.2 106.5 833.8 105.2 834.6 103.6C835.2 102.4 834.4 101.8 833.2 101.8C831.6 101.8 831.2 100.4 831.3 99.2C831.6 96.4 834.2 94.4 837.6 94.4Z" fill="#f0c848" stroke="#b88a18" stroke-width=".8"/><circle cx="835.2" cy="97.6" r="1.25" fill="#e02020"/><circle cx="839.6" cy="98" r="1.2" fill="#2040d8"/><circle cx="839.6" cy="102.6" r="1.4" fill="#18a018"/>
<text x="857" y="102.9" font-family="Liberation Serif,serif" font-weight="bold" font-size="14.2" text-anchor="middle" fill="#1f3f8f">A</text><rect x="850.2" y="104.2" width="2.6" height="2.7" fill="#2050e0"/><rect x="853.6" y="104.2" width="2.6" height="2.7" fill="#e03030"/><rect x="857" y="104.2" width="2.6" height="2.7" fill="#f0b020"/><rect x="860.4" y="104.2" width="2.8" height="2.7" fill="#20b030"/>
<rect x="870" y="104" width="14" height="2.9" fill="#0000ff"/><rect x="870" y="101.6" width="1.6" height="1.4" fill="#2050e0"/><path d="M884 94.4L880.6 98" stroke="#e0a828" stroke-width="2.2" stroke-linecap="round"/><path d="M880.4 96.8C877.8 97.8 877 101 872.4 102.4C876 103.2 880.2 101.6 882.2 98.6Z" fill="#5a90e0"/>
</g>
<!-- size grips -->
<g fill="#7a7a7a"><rect x="1004" y="682" width="1.6" height="1.6"/><rect x="1000.4" y="685.6" width="1.6" height="1.6"/><rect x="1004" y="685.6" width="1.6" height="1.6"/><rect x="997" y="689.2" width="1.6" height="1.6"/><rect x="1000.4" y="689.2" width="1.6" height="1.6"/><rect x="1004" y="689.2" width="1.6" height="1.6"/>
<rect x="1004.8" y="702" width="1.6" height="1.6"/><rect x="1001.2" y="705.6" width="1.6" height="1.6"/><rect x="1004.8" y="705.6" width="1.6" height="1.6"/><rect x="997.8" y="709" width="1.6" height="1.6"/><rect x="1001.2" y="709" width="1.6" height="1.6"/><rect x="1004.8" y="709" width="1.6" height="1.6"/></g>
</svg>

</body>
</html>
